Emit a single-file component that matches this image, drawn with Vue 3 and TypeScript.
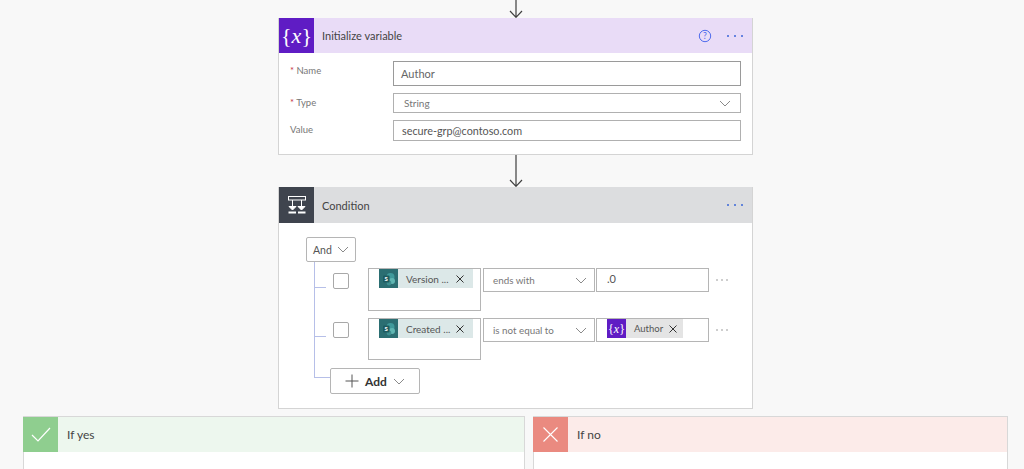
<script setup lang="ts">
interface Field { label: string; required: boolean; kind: string; value: string }
const fields: Field[] = [
  { label: 'Name', required: true, kind: 'name', value: 'Author' },
  { label: 'Type', required: true, kind: 'type', value: 'String' },
  { label: 'Value', required: false, kind: 'value', value: 'secure-grp@contoso.com' },
]
interface Row { token: string; op: string; value: string; second: boolean }
const rows: Row[] = [
  { token: 'Version ...', op: 'ends with', value: '.0', second: false },
  { token: 'Created ...', op: 'is not equal to', value: '', second: true },
]
</script>

<template>
  <div class="page">
    <div class="arrow top-arrow">
      <svg width="18" height="18" viewBox="0 0 18 18"><path d="M9 0V17M3 11L9 17.3L15 11" fill="none" stroke="#3f3f3f" stroke-width="1.2" /></svg>
    </div>

    <section class="card var-card">
      <header class="head head-purple">
        <div class="icon icon-purple"><span class="curly">{<i>x</i>}</span></div>
        <span class="title">Initialize variable</span>
        <svg class="help" width="14" height="14" viewBox="0 0 14 14"><circle cx="7" cy="7" r="5.7" fill="none" stroke="#4f6bed" stroke-width="1" /><text x="7" y="10" text-anchor="middle" font-size="8.5" fill="#4f6bed" font-family="Lato">?</text></svg>
        <svg class="more" width="18" height="4" viewBox="0 0 18 4"><circle cx="2" cy="2" r="1" fill="#3a66d8" /><circle cx="9" cy="2" r="1" fill="#3a66d8" /><circle cx="16" cy="2" r="1" fill="#3a66d8" /></svg>
      </header>
      <div class="form">
        <div v-for="f in fields" :key="f.label" class="field" :class="'field-' + f.kind">
          <label class="lab"><span v-if="f.required" class="req">* </span>{{ f.label }}</label>
          <div class="control">
            <span>{{ f.value }}</span>
            <svg v-if="f.kind === 'type'" width="12" height="7" viewBox="0 0 12 7"><path d="M1 1L6 6L11 1" fill="none" stroke="#8a8a8a" /></svg>
          </div>
        </div>
      </div>
    </section>

    <div class="arrow mid-arrow">
      <svg width="18" height="32" viewBox="0 0 18 32"><path d="M9 0V31M3 25L9 31.3L15 25" fill="none" stroke="#3f3f3f" stroke-width="1.2" /></svg>
    </div>

    <section class="card cond-card">
      <header class="head head-grey">
        <div class="icon icon-dark">
          <svg width="18" height="18" viewBox="0 0 18 18" fill="none" stroke="#fff" stroke-width="1">
            <rect x="0.5" y="0.5" width="17" height="3.5" />
            <path d="M4.5 4V10.5M13.5 4V10.5" />
            <path d="M1 10.5H8L4.5 14ZM10 10.5H17L13.5 14Z" fill="#fff" />
            <path d="M0.5 16.5H8M10 16.5H17.5" stroke-width="2" />
          </svg>
        </div>
        <span class="title">Condition</span>
        <svg class="more" width="18" height="4" viewBox="0 0 18 4"><circle cx="2" cy="2" r="1" fill="#3a66d8" /><circle cx="9" cy="2" r="1" fill="#3a66d8" /><circle cx="16" cy="2" r="1" fill="#3a66d8" /></svg>
      </header>
      <div class="cond-body">
        <div class="and">
          <span>And</span>
          <svg width="12" height="7" viewBox="0 0 12 7"><path d="M1 1L6 6L11 1" fill="none" stroke="#8a8a8a" /></svg>
        </div>
        <div v-for="r in rows" :key="r.token" class="row" :class="{ second: r.second }">
          <div class="conn"><div class="tick"></div></div>
          <div class="check"></div>
          <div class="tokenbox">
            <div class="chip chip-sp">
              <div class="chip-icon sp">
                <svg width="14" height="14" viewBox="0 0 14 14">
                  <circle cx="8.5" cy="5" r="4" fill="#3f9a9b" />
                  <circle cx="10" cy="9" r="3" fill="#5fb6b2" />
                  <circle cx="7" cy="11" r="2.4" fill="#3d8f90" />
                  <rect x="1" y="3.5" width="6.5" height="7" rx="1" fill="#1d5b60" />
                  <text x="4.2" y="9" text-anchor="middle" font-size="6" font-weight="700" fill="#fff" font-family="Lato">S</text>
                </svg>
              </div>
              <span class="chip-text">{{ r.token }}</span>
              <svg class="x" width="8" height="8" viewBox="0 0 8 8"><path d="M0.5 0.5L7.5 7.5M7.5 0.5L0.5 7.5" stroke="#333" fill="none" /></svg>
            </div>
          </div>
          <div class="op">
            <span>{{ r.op }}</span>
            <svg width="12" height="7" viewBox="0 0 12 7"><path d="M1 1L6 6L11 1" fill="none" stroke="#8a8a8a" /></svg>
          </div>
          <div class="val">
            <span v-if="r.value" class="val-text">{{ r.value }}</span>
            <div v-else class="chip chip-var">
              <div class="chip-icon icon-purple"><span class="curly small">{<i>x</i>}</span></div>
              <span class="chip-text">Author</span>
              <svg class="x" width="8" height="8" viewBox="0 0 8 8"><path d="M0.5 0.5L7.5 7.5M7.5 0.5L0.5 7.5" stroke="#333" fill="none" /></svg>
            </div>
          </div>
          <svg class="row-more" width="12" height="2" viewBox="0 0 12 2"><circle cx="1" cy="1" r="0.7" fill="#777" /><circle cx="6" cy="1" r="0.7" fill="#777" /><circle cx="11" cy="1" r="0.7" fill="#777" /></svg>
        </div>
        <div class="add-row">
          <div class="add-conn"></div>
          <div class="add">
            <svg width="14" height="14" viewBox="0 0 14 14"><path d="M7 0.5V13.5M0.5 7H13.5" stroke="#555" fill="none" /></svg>
            <b>Add</b>
            <svg width="12" height="7" viewBox="0 0 12 7"><path d="M1 1L6 6L11 1" fill="none" stroke="#8a8a8a" /></svg>
          </div>
        </div>
      </div>
    </section>

    <div class="branches">
      <section class="branch yes">
        <header class="head head-green">
          <div class="icon icon-green">
            <svg width="20" height="15" viewBox="0 0 20 15"><path d="M1 8L7 14L19 1" fill="none" stroke="#fff" stroke-width="1.2" /></svg>
          </div>
          <span class="title">If yes</span>
        </header>
        <div class="branch-body"></div>
      </section>
      <section class="branch no">
        <header class="head head-red">
          <div class="icon icon-red">
            <svg width="15" height="15" viewBox="0 0 15 15"><path d="M0.5 0.5L14.5 14.5M14.5 0.5L0.5 14.5" fill="none" stroke="#fff" stroke-width="1.1" /></svg>
          </div>
          <span class="title">If no</span>
        </header>
        <div class="branch-body"></div>
      </section>
    </div>
  </div>
</template>

<style>
html, body { margin: 0; background: #f8f8f8; overflow: hidden; }
</style>

<style scoped>
.page {
  width: 1024px;
  height: 469px;
  overflow: hidden;
  background: #f8f8f8;
  font-family: Lato, "Open Sans", sans-serif;
  color: #333;
  display: flex;
  flex-direction: column;
  align-items: flex-start;
}
.page > * { flex-shrink: 0; }
.arrow { margin-left: 507px; display: flex; }
.top-arrow { height: 18px; }
.mid-arrow { height: 32px; }
.card {
  margin-left: 278px;
  width: 475px;
  box-sizing: border-box;
  background: #fff;
  border: 1px solid #d4d4d4;
  border-top: 0;
}
.var-card { height: 137px; }
.cond-card { height: 222px; }
.head { height: 35px; display: flex; align-items: center; }
.head-purple { background: #e9dcf7; }
.head-grey { background: #dcdddf; height: 36px; }
.head-green { background: #edf7ee; }
.head-red { background: #fcebe9; }
.icon { width: 35px; height: 100%; display: flex; align-items: center; justify-content: center; flex: none; }
.icon-purple { background: #5f1cc4; }
.icon-dark { background: #3f444e; }
.icon-green { background: #8fce8f; }
.icon-red { background: #ea8a80; }
.curly { color: #fff; font-family: "Liberation Serif", serif; font-size: 22px; line-height: 1; }
.curly.small { font-size: 12px; }
.title { margin-left: 8px; font-size: 11px; color: #444; }
.help { margin-left: auto; margin-right: 14px; }
.more { margin-right: 8px; }
.head-grey .more { margin-left: auto; }
.form { display: flex; flex-direction: column; padding: 8px 11px 0 11px; gap: 7px; }
.field { display: flex; }
.lab { width: 103px; flex: none; font-size: 9.5px; color: #777; padding-top: 4px; }
.req { color: #c8384a; }
.control {
  flex: 1;
  box-sizing: border-box;
  background: #fff;
  border: 1px solid #b0b0b0;
  display: flex;
  align-items: center;
  justify-content: space-between;
  padding: 0 9px;
  font-size: 10px;
  color: #444;
}
.field-name .control { height: 25px; font-size: 11px; padding: 0 7px; color: #666; border-color: #9a9a9a; }
.field-type .control { height: 20px; }
.field-type .control span { padding-left: 1px; color: #777; }
.field-value .control { height: 21px; padding: 0 8px; font-size: 10.8px; color: #555; }
.cond-body { padding: 14px 0 0 27px; display: flex; flex-direction: column; align-items: flex-start; }
.and {
  width: 50px;
  height: 25px;
  box-sizing: border-box;
  border: 1px solid #b5b5b5;
  border-radius: 2px;
  display: flex;
  align-items: center;
  justify-content: space-between;
  padding: 0 6px 0 6px;
  font-size: 10.5px;
  color: #555;
}
.row { display: flex; align-items: flex-start; margin-left: 8px; height: 50px; }
.row.second { height: 49px; }
.conn { width: 11px; height: 100%; border-left: 1px solid #b6bfe8; flex: none; }
.tick { margin-top: 25px; width: 11px; border-top: 1px solid #b6bfe8; }
.row.second .tick { margin-top: 24px; }
.check {
  width: 16px;
  height: 16px;
  box-sizing: border-box;
  border: 1px solid #a8a8a8;
  border-radius: 2px;
  margin: 11px 0 0 7px;
  flex: none;
}
.row.second .check { margin-top: 10px; }
.tokenbox {
  margin: 6px 0 0 19px;
  width: 113px;
  height: 43px;
  box-sizing: border-box;
  border: 1px solid #b5b5b5;
  padding: 0 0 0 10px;
  flex: none;
}
.row.second .tokenbox { height: 42px; }
.chip { height: 19px; display: flex; align-items: center; font-size: 10px; color: #555; box-sizing: border-box; }
.chip-sp { width: 94px; background: #dce8e8; }
.chip-icon { width: 19px; height: 19px; flex: none; display: flex; align-items: center; justify-content: center; }
.sp { background: #2b6e72; }
.chip-text { margin-left: 8px; white-space: nowrap; }
.chip-sp .x { margin-left: auto; margin-right: 9px; }
.op {
  margin: 6px 0 0 2px;
  width: 112px;
  height: 24px;
  box-sizing: border-box;
  border: 1px solid #b5b5b5;
  display: flex;
  align-items: center;
  justify-content: space-between;
  padding: 0 7px 0 9px;
  font-size: 9.8px;
  color: #777;
  flex: none;
}
.val {
  margin: 6px 0 0 1px;
  width: 113px;
  height: 24px;
  box-sizing: border-box;
  border: 1px solid #b5b5b5;
  display: flex;
  align-items: flex-start;
  padding-left: 10px;
  flex: none;
}
.val-text { font-size: 11px; color: #555; padding-top: 3px; }
.chip-var { width: 76px; background: #e4e4e4; }
.chip-var .chip-text { font-size: 9.5px; }
.chip-var .x { margin-left: 6px; }
.row-more { margin: 17px 0 0 7px; flex: none; }
.add-row { display: flex; margin-left: 8px; padding-top: 7px; align-items: flex-start; }
.add-conn { width: 15px; height: 9px; margin-top: -7px; padding-top: 7px; border-left: 1px solid #b6bfe8; border-bottom: 1px solid #b6bfe8; flex: none; }
.add {
  width: 90px;
  height: 26px;
  box-sizing: border-box;
  border: 1px solid #b5b5b5;
  border-radius: 2px;
  background: #fff;
  display: flex;
  align-items: center;
  justify-content: center;
  gap: 6px;
  font-size: 12px;
  color: #333;
}
.branches { display: flex; margin: 7px 0 0 23px; gap: 8px; align-items: flex-start; }
.branch { box-sizing: border-box; background: #fff; border: 1px solid #d8d8d8; border-width: 1px 1px 0 1px; }
.yes { width: 502px; }
.no { width: 475px; }
.branch-body { height: 20px; }
.branch .icon { margin-left: -1px; }
.branch .title { font-size: 12px; margin-left: 9px; }
</style>
